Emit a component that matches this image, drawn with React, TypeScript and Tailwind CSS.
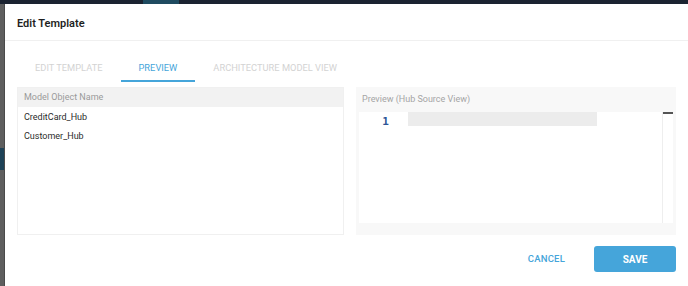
const rows = ["CreditCard_Hub", "Customer_Hub"];

function Tab({ label, active }: { label: string; active?: boolean }) {
  return (
    <div
      className={
        active
          ? "px-[18px] h-[26px] flex items-center border-b-2 border-[#45a5da] text-[#45a5da]"
          : "px-[18px] h-[26px] flex items-center border-b-2 border-transparent text-[#d3d3d3]"
      }
    >
      {label}
    </div>
  );
}

export default function App() {
  return (
    <div className="w-[688px] h-[286px] flex flex-col overflow-hidden bg-white font-['Roboto',sans-serif]">
      {/* top app bar peeking out behind the dialog */}
      <div className="h-[4px] flex shrink-0 bg-[#1b2331]">
        <div className="w-[143px]" />
        <div className="w-[36px] bg-[#1f4b60]" />
      </div>

      <div className="flex flex-1 min-h-0">
        {/* backdrop strip */}
        <div className="w-[5px] shrink-0 bg-[#5e5e5e] border-r border-[#4a4a4a] flex flex-col">
          <div className="h-[144px]" />
          <div className="h-[22px] bg-[#1e4257]" />
        </div>

        {/* dialog */}
        <div className="flex-1 flex flex-col">
          <div className="h-[37px] shrink-0 flex items-center px-[12px] pt-[5px] border-b border-[#f0f0f0]">
            <h1 className="text-[11px] font-semibold text-[#1f1f1f]">Edit Template</h1>
          </div>

          <div className="px-[12px] pt-[15px]">
            <div className="flex text-[9.3px] leading-none">
              <Tab label="EDIT TEMPLATE" />
              <Tab label="PREVIEW" active />
              <Tab label="ARCHITECTURE MODEL VIEW" />
            </div>

            <div className="flex gap-[12px] mt-[5px]">
              <div className="w-[327px] h-[148px] border border-[#f0f0f0] flex flex-col">
                <div className="h-[19px] bg-[#f2f2f2] flex items-center px-[6px] text-[9px] text-[#9a9a9a]">
                  Model Object Name
                </div>
                <div className="flex flex-col pt-[1px] text-[9px] text-[#2b2b2b]">
                  {rows.map((r) => (
                    <div key={r} className="h-[19px] flex items-center px-[6px]">
                      {r}
                    </div>
                  ))}
                </div>
              </div>

              <div className="w-[320px] h-[148px] bg-[#f8f8f8] flex flex-col px-[3px]">
                <div className="h-[25px] flex items-center px-[3px] text-[9px] text-[#a5a5a5]">
                  Preview (Hub Source View)
                </div>
                <div className="h-[111px] bg-white flex">
                  <div className="w-[49px] flex justify-center pt-[2px] pl-[4px] text-[11px] font-bold text-[#2d5597] font-['DejaVu_Sans_Mono',monospace]">
                    1
                  </div>
                  <div className="flex-1">
                    <div className="w-[189px] h-[14px] bg-[#ececec]" />
                  </div>
                  <div className="w-[11px] border-l border-[#eeeeee]">
                    <div className="h-[2px] bg-[#555555]" />
                  </div>
                </div>
              </div>
            </div>

            <div className="flex justify-end items-center gap-[29px] mt-[11px]">
              <button className="text-[9.5px] font-medium text-[#45a5da] tracking-[0.2px]">CANCEL</button>
              <button className="w-[82px] h-[26px] rounded-[3px] bg-[#45a5da] text-white text-[10px] font-bold">
                SAVE
              </button>
            </div>
          </div>
        </div>
      </div>
    </div>
  );
}
